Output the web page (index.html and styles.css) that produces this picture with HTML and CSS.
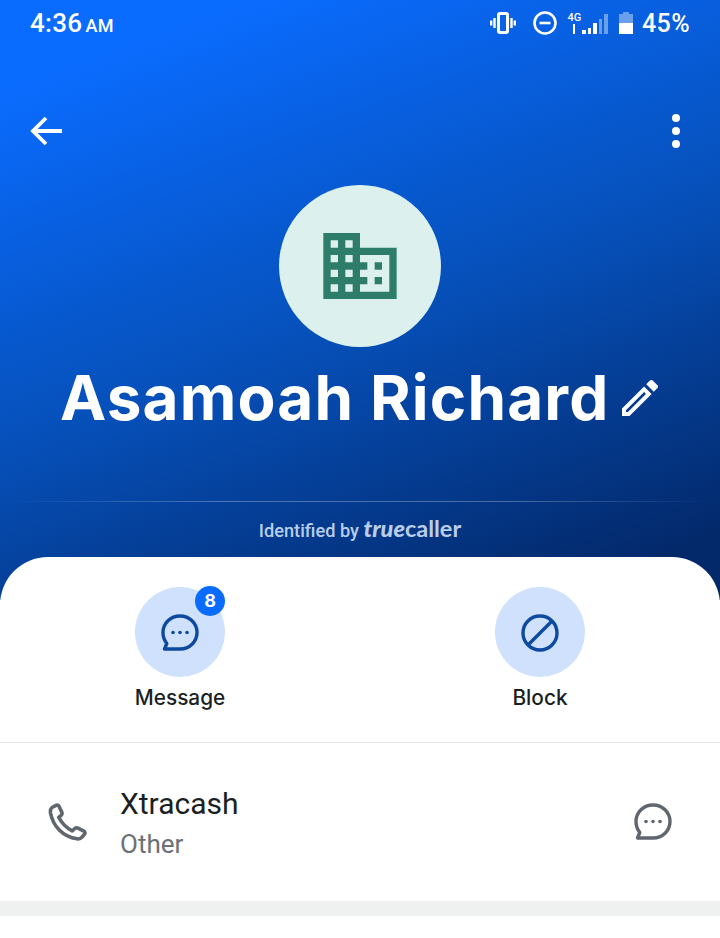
FILE: index.html
```html
<!DOCTYPE html>
<html lang="en">
<head>
    <meta charset="UTF-8">
    <meta name="viewport" content="width=device-width, initial-scale=1.0">
    <title>Asamoah Richard</title>
    <link rel="stylesheet" href="styles.css">
</head>
<body>

    <div class="screen">
        <div class="hero">
            <div class="status-bar">
                <div class="clock">4:36<span class="ampm">AM</span></div>
                <div class="status-icons">
                    <svg class="ic-vibrate" width="26" height="22" viewBox="0 0 26 22" fill="none" stroke="#fff">
                        <rect x="8.500" y="1.500" width="9" height="19" rx="1.500" stroke-width="3"/>
                        <path d="M4.500 6v10M1.200 8.500v5M21.500 6v10M24.800 8.500v5" stroke-width="2.400"/>
                    </svg>
                    <svg class="ic-dnd" width="24" height="24" viewBox="0 0 24 24" fill="none" stroke="#fff" stroke-width="2.600">
                        <circle cx="12" cy="12" r="10.500"/>
                        <path d="M6.500 12h11"/>
                    </svg>
                    <div class="net">
                        <span class="net-label">4G</span>
                        <svg width="6" height="10" viewBox="0 0 6 10" fill="#fff"><path d="M2 0h2v10H2z"/></svg>
                    </div>
                    <div class="bars">
                        <span class="bar b1"></span>
                        <span class="bar b2"></span>
                        <span class="bar b3"></span>
                        <span class="bar b4 dim"></span>
                        <span class="bar b5 dim"></span>
                    </div>
                    <svg class="ic-battery" width="14" height="22" viewBox="0 0 14 22">
                        <path d="M4 0h6v2h4v20H0V2h4z" fill="#fff" opacity=".4"/>
                        <path d="M0 11h14v11H0z" fill="#fff"/>
                    </svg>
                    <div class="percent">45%</div>
                </div>
            </div>

            <div class="toolbar">
                <svg width="32" height="32" viewBox="0 0 32 32" fill="none" stroke="#fff" stroke-width="3.800">
                    <path d="M32 16H4M16 3 3 16l13 13"/>
                </svg>
                <div class="more">
                    <span></span><span></span><span></span>
                </div>
            </div>

            <div class="avatar">
                <svg width="74" height="66" viewBox="2 3 20 18" fill="#2e7d6b">
                    <path d="M12 7V3H2v18h20V7H12zM6 19H4v-2h2v2zm0-4H4v-2h2v2zm0-4H4V9h2v2zm0-4H4V5h2v2zm4 12H8v-2h2v2zm0-4H8v-2h2v2zm0-4H8V9h2v2zm0-4H8V5h2v2zm10 12h-8v-2h2v-2h-2v-2h2v-2h-2V9h8v10zm-2-8h-2v2h2v-2zm0 4h-2v2h2v-2z"/>
                </svg>
            </div>

            <div class="name-row">
                <h1 class="name">Asamoah Richard</h1>
                <svg class="ic-edit" width="36" height="36" viewBox="3 3 18 18" fill="#fff">
                    <path d="M3 17.250V21h3.750L17.810 9.940l-3.750-3.750L3 17.250zM5.920 19H5v-.92l9.060-9.060.92.92L5.920 19zM20.710 7.040c.39-.39.39-1.020 0-1.410l-2.340-2.340c-.39-.39-1.020-.39-1.410 0l-1.830 1.830 3.750 3.750 1.830-1.830z"/>
                </svg>
            </div>

            <div class="hero-line"></div>

            <div class="identified">
                Identified by <span class="brand"><span class="brand-true">true</span>caller</span>
            </div>
        </div>

        <div class="sheet">
            <div class="actions">
                <div class="action">
                    <div class="action-circle">
                        <svg class="bubble" width="38" height="38" viewBox="0 0 38 38" fill="none" stroke="#0d4a9f" stroke-width="3.400">
                            <path d="M19 2c9.500 0 17 7.300 17 16.500S28.500 35 19 35H3.500l2.300-5.500C3.400 26.500 2 22.700 2 18.500 2 9.300 9.500 2 19 2z" stroke-linejoin="round"/>
                            <g fill="#0d4a9f" stroke="none">
                                <circle cx="12" cy="18.500" r="1.800"/>
                                <circle cx="19" cy="18.500" r="1.800"/>
                                <circle cx="26" cy="18.500" r="1.800"/>
                            </g>
                        </svg>
                        <span class="badge">8</span>
                    </div>
                    <div class="action-label">Message</div>
                </div>
                <div class="action">
                    <div class="action-circle">
                        <svg class="bubble" width="38" height="38" viewBox="0 0 38 38" fill="none" stroke="#0d4a9f" stroke-width="3.400">
                            <circle cx="19" cy="19" r="17"/>
                            <path d="M7 31 31 7"/>
                        </svg>
                    </div>
                    <div class="action-label">Block</div>
                </div>
            </div>

            <div class="number-row">
                <svg class="ic-phone" width="40" height="38" viewBox="0 0 40 38" fill="none" stroke="#5f666e" stroke-width="3.600" stroke-linejoin="round">
                    <path d="M4 4.500 8 2.300c1.300-.6 2.500-.2 3 1l2.800 6c.5 1.200.2 2.200-.7 3l-2.400 2c3 6 7.500 10.500 13.500 13.500l2.600-2.300c1-.8 2-.9 3.200-.3l5.800 3c1.300.7 1.500 2 .7 3l-2.500 3c-1.300 1.500-3 2-5 1.600C14.500 33.600 5 23 2.500 10 2.200 7.800 2.700 5.600 4 4.500z"/>
                </svg>
                <div class="number-text">
                    <div class="number-title">Xtracash</div>
                    <div class="number-sub">Other</div>
                </div>
                <svg width="38" height="38" viewBox="0 0 38 38" fill="none" stroke="#5f666e" stroke-width="3.400">
                    <path d="M19 2c9.500 0 17 7.300 17 16.500S28.500 35 19 35H3.500l2.300-5.500C3.400 26.500 2 22.700 2 18.500 2 9.300 9.500 2 19 2z" stroke-linejoin="round"/>
                    <g fill="#5f666e" stroke="none">
                        <circle cx="12" cy="18.500" r="1.800"/>
                        <circle cx="19" cy="18.500" r="1.800"/>
                        <circle cx="26" cy="18.500" r="1.800"/>
                    </g>
                </svg>
            </div>

            <div class="band"></div>
        </div>
    </div>

</body>
</html>
```

FILE: styles.css
```css
html, body {
    margin: 0;
    padding: 0;
    background-color: #fff;
}

.screen {
    width: 720px;
    height: 938px;
    overflow: hidden;
    font-family: 'Inter', sans-serif;
}

.hero {
    height: 600px;
    box-sizing: border-box;
    background: linear-gradient(160deg, #0a6cff 10%, #0650ba 52%, #03296b 92%);
    color: #fff;
}

.status-bar {
    height: 46px;
    padding: 0 30px;
    display: flex;
    justify-content: space-between;
    align-items: center;
    font-family: 'Roboto', sans-serif;
    font-weight: 500;
}

.clock {
    font-size: 26px;
    letter-spacing: 0.3px;
}

.ampm {
    margin-left: 3px;
    font-size: 18px;
}

.status-icons {
    display: flex;
    align-items: center;
}

.ic-dnd {
    margin-left: 17px;
}

.net {
    margin-left: 10px;
    width: 14px;
    height: 22px;
    display: flex;
    flex-direction: column;
    align-items: center;
}

.net-label {
    font-size: 11px;
    line-height: 12px;
}

.bars {
    margin-left: 1px;
    display: flex;
    align-items: flex-end;
    gap: 2px;
    height: 22px;
}

.bar {
    width: 3.500px;
    background-color: #fff;
}

.bar.dim {
    opacity: 0.4;
}

.b1 { height: 4px; }
.b2 { height: 6px; }
.b3 { height: 11px; }
.b4 { height: 15px; }
.b5 { height: 20px; }

.ic-battery {
    margin-left: 11px;
}

.percent {
    margin-left: 9px;
    font-size: 25px;
    letter-spacing: 0.4px;
}

.toolbar {
    height: 32px;
    margin-top: 69px;
    padding: 0 40px 0 30px;
    display: flex;
    justify-content: space-between;
    align-items: center;
}

.more {
    display: flex;
    flex-direction: column;
    gap: 5px;
}

.more span {
    width: 8px;
    height: 8px;
    border-radius: 50%;
    background-color: #fff;
}

.avatar {
    width: 162px;
    height: 162px;
    margin: 38px auto 0;
    border-radius: 50%;
    background-color: #dcf0ed;
    display: flex;
    justify-content: center;
    align-items: center;
}

.name-row {
    height: 70px;
    margin-top: 15px;
    padding-left: 60px;
    display: flex;
    align-items: center;
    gap: 13px;
}

.name {
    margin: 0;
    font-size: 62px;
    font-weight: 700;
    white-space: nowrap;
    letter-spacing: 1.150px;
}

.ic-edit {
    margin-top: 2px;
}

.hero-line {
    height: 1px;
    margin: 69px 8px 0;
    background: linear-gradient(90deg, rgba(255,255,255,0), rgba(255,255,255,0.28) 30%, rgba(255,255,255,0.28) 70%, rgba(255,255,255,0));
}

.identified {
    margin-top: 11px;
    text-align: center;
    font-family: 'Roboto', sans-serif;
    font-size: 18.200px;
    font-weight: 500;
    line-height: 30px;
    color: #b9cde9;
    white-space: nowrap;
}

.brand {
    font-family: 'Lato', sans-serif;
    font-weight: 700;
    font-size: 23.500px;
}

.brand-true {
    font-style: italic;
    font-weight: 900;
}

.sheet {
    height: 381px;
    margin-top: -43px;
    position: relative;
    background-color: #fff;
    border-radius: 48px 48px 0 0;
}

.actions {
    height: 186px;
    box-sizing: border-box;
    padding-top: 30px;
    display: grid;
    grid-template-columns: 360px 360px;
    border-bottom: 1px solid #e6e8e8;
}

.action {
    display: flex;
    flex-direction: column;
    align-items: center;
}

.action-circle {
    width: 90px;
    height: 90px;
    border-radius: 50%;
    background-color: #cfe1fc;
    display: flex;
    justify-content: center;
    align-items: center;
    position: relative;
}

.bubble {
    margin-top: 2px;
}

.badge {
    position: absolute;
    top: -1px;
    right: 0;
    width: 30px;
    height: 30px;
    border-radius: 50%;
    background-color: #0a6cff;
    color: #fff;
    font-size: 18px;
    font-weight: 700;
    line-height: 30px;
    text-align: center;
}

.action-label {
    margin-top: 7px;
    font-size: 20.800px;
    font-weight: 500;
    line-height: 28px;
    color: #1b1f23;
}

.number-row {
    height: 158px;
    padding: 0 48px;
    display: flex;
    align-items: center;
    font-family: 'Roboto', sans-serif;
}

.number-text {
    flex: 1;
    margin-top: 4px;
    margin-left: 32px;
}

.number-title {
    font-size: 30px;
    line-height: 40px;
    color: #1b1f23;
}

.number-sub {
    font-size: 26px;
    line-height: 40px;
    color: #6b7076;
}

.band {
    height: 15px;
    background-color: #eff1f0;
}
```
